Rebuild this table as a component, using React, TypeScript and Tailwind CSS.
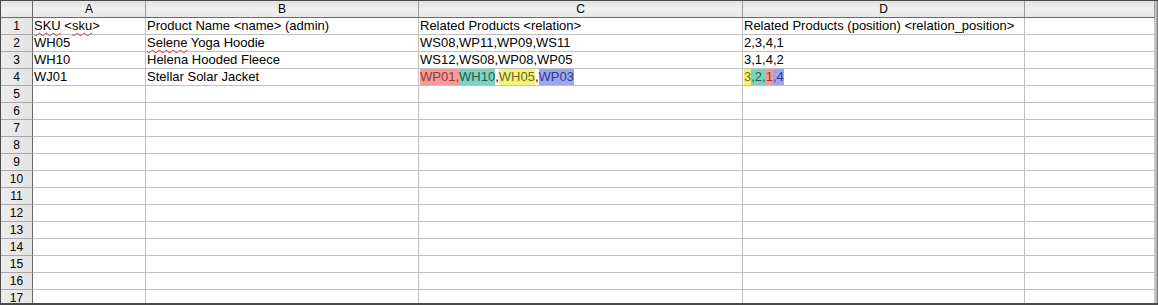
import type { ReactNode } from "react";

const cols = ["A", "B", "C", "D", ""];

type Seg = { t: string; c?: string };

// highlight colours used for the matching related products
const HL: Record<string, string> = {
  red: "bg-[#f89a98] text-[#8e3a3a]",
  teal: "bg-[#7fd2bd] text-[#1f5e52]",
  yellow: "bg-[#f3f37c] text-[#6d6b1e]",
  blue: "bg-[#9ea6f2] text-[#2e3a8c]",
};

function Segs({ segs }: { segs: Seg[] }) {
  return (
    <>
      {segs.map((s, i) => (
        <span key={i} className={`inline-block h-[16px] align-top ${s.c ? HL[s.c] : ""}`}>
          {s.t}
        </span>
      ))}
    </>
  );
}

const wavy = "underline decoration-wavy decoration-[#e03030] decoration-1 underline-offset-[2px]";

const rows: ReactNode[][] = [
  [
    <>
      <span className={wavy}>SKU</span> &lt;<span className={wavy}>sku</span>&gt;
    </>,
    "Product Name <name> (admin)",
    "Related Products <relation>",
    "Related Products (position) <relation_position>",
  ],
  ["WH05", <><span className={wavy}>Selene</span> Yoga Hoodie</>, "WS08,WP11,WP09,WS11", "2,3,4,1"],
  ["WH10", "Helena Hooded Fleece", "WS12,WS08,WP08,WP05", "3,1,4,2"],
  [
    "WJ01",
    "Stellar Solar Jacket",
    <Segs
      segs={[
        { t: "WP01,", c: "red" },
        { t: "WH10", c: "teal" },
        { t: "," },
        { t: "WH05", c: "yellow" },
        { t: "," },
        { t: "WP03", c: "blue" },
      ]}
    />,
    <Segs
      segs={[
        { t: "3", c: "yellow" },
        { t: ",2,", c: "teal" },
        { t: "1", c: "red" },
        { t: ",4", c: "blue" },
      ]}
    />,
  ],
];

const grid = "grid grid-cols-[32px_113px_273px_324px_282px_130px]";

export default function App() {
  return (
    <div
      className="flex h-[305px] w-[1158px] overflow-hidden border-t border-l border-b-2 border-[#4a4a4a] bg-white text-[13px] text-black"
      style={{ fontFamily: '"Liberation Sans", Arial, sans-serif' }}
    >
      <div className="flex-1 overflow-hidden">
        {/* column headers */}
        <div className={`${grid} h-[17px] border-b border-[#6a6a6a] bg-gradient-to-b from-[#e2e2e2] via-[#f0f0f0] to-[#e8e8e8]`}>
          <div className="border-r border-[#6a6a6a]" />
          {cols.map((c, i) => (
            <div
              key={i}
              className="flex items-center justify-center border-r border-[#9c9c9c] text-[12px] leading-[16px]"
            >
              {c}
            </div>
          ))}
        </div>

        {/* rows */}
        {Array.from({ length: 17 }, (_, r) => {
          const data = rows[r] ?? [];
          return (
            <div key={r} className={`${grid} h-[17px]`}>
              <div className="flex items-center justify-center border-r border-b border-r-[#6a6a6a] border-b-[#a8a8a8] bg-gradient-to-r from-[#ececec] to-[#e4e4e4] text-[12px] leading-[16px]">
                {r + 1}
              </div>
              {[0, 1, 2, 3, 4].map((c) => (
                <div
                  key={c}
                  className="whitespace-nowrap border-r border-b border-[#c0c0c0] pl-[1px] leading-[16px]"
                >
                  <span>{data[c] ?? null}</span>
                </div>
              ))}
            </div>
          );
        })}
      </div>
      <div className="w-[3px] shrink-0 bg-gradient-to-r from-[#d8d8d8] via-[#b0b0b0] to-[#6a6a6a]" />
    </div>
  );
}
